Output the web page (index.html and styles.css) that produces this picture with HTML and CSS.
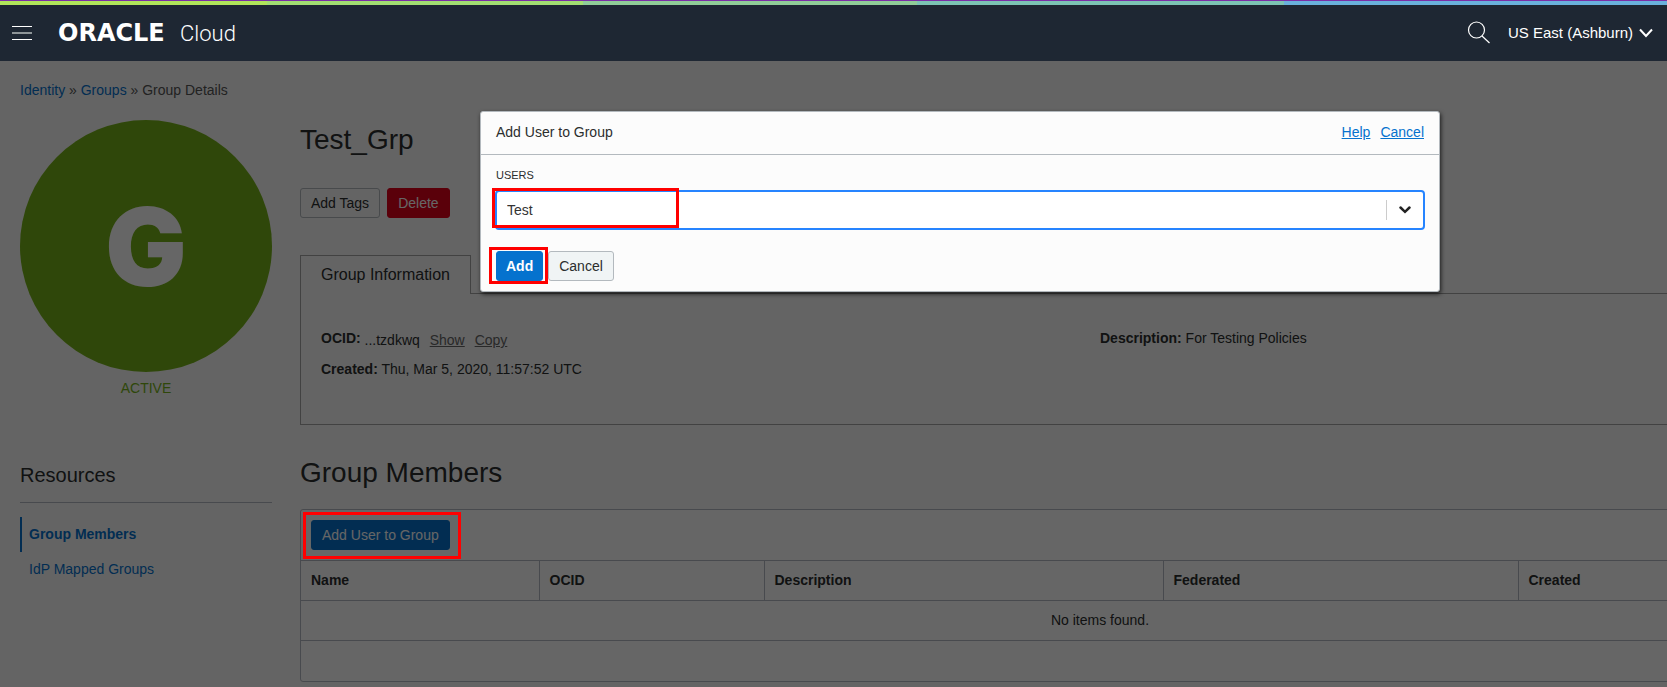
FILE: index.html
```html
<!DOCTYPE html>
<html lang="en">
<head>
  <meta charset="UTF-8">
  <meta name="viewport" content="width=device-width, initial-scale=1.0">
  <title>Group Details | Oracle Cloud</title>
  <link rel="stylesheet" href="styles.css">
</head>
<body>

  <header class="topbar">
    <button class="menu-btn" aria-label="Open menu">
      <svg width="20" height="14" viewBox="0 0 20 14">
        <path d="M0 0.5h20M0 13.5h20" stroke="#fff"/>
        <path d="M0 7h20" stroke="#8e9598" stroke-width="2"/>
      </svg>
    </button>
    <a class="logo" href="#"><span class="logo-brand">ORACLE</span><span class="logo-product">Cloud</span></a>
    <button class="search-btn" aria-label="Search">
      <svg width="24" height="24" viewBox="0 0 24 24" fill="none" stroke="#fff" stroke-width="1.2">
        <circle cx="9.5" cy="9" r="8"/>
        <path d="M15 15l7.500 7"/>
      </svg>
    </button>
    <button class="region-btn">
      US East (Ashburn)
      <svg width="14" height="10" viewBox="0 0 14 10" fill="none" stroke="#fff" stroke-width="2">
        <path d="M1 1.500l6 6.500 6-6.500"/>
      </svg>
    </button>
  </header>

  <div class="page">
    <nav class="breadcrumb">
      <a href="#">Identity</a> » <a href="#">Groups</a> » Group Details
    </nav>

    <div class="layout">
      <aside class="sidebar">
        <div class="avatar">G</div>
        <div class="status">ACTIVE</div>
        <h2 class="resources-title">Resources</h2>
        <ul class="resources">
          <li><a class="active" href="#">Group Members</a></li>
          <li><a href="#">IdP Mapped Groups</a></li>
        </ul>
      </aside>

      <main class="content">
        <h1>Test_Grp</h1>
        <div class="actions">
          <button class="btn">Add Tags</button>
          <button class="btn btn-danger">Delete</button>
        </div>

        <div class="tabs">
          <button class="tab">Group Information</button>
          <div class="tabs-line"></div>
        </div>
        <div class="info">
          <div class="info-col">
            <div class="info-row ocid"><b>OCID:</b> <span>...tzdkwq</span> <a href="#">Show</a> <a href="#">Copy</a></div>
            <div class="info-row"><b>Created:</b> Thu, Mar 5, 2020, 11:57:52 UTC</div>
          </div>
          <div class="info-col">
            <div class="info-row"><b>Description:</b> For Testing Policies</div>
          </div>
        </div>

        <h1 class="members-title">Group Members</h1>
        <div class="members">
          <div class="toolbar">
            <button class="btn btn-primary">Add User to Group</button>
            <span class="mark mark-open"></span>
          </div>
          <table>
            <colgroup>
              <col class="col-name"><col class="col-ocid"><col class="col-desc"><col class="col-fed"><col>
            </colgroup>
            <thead>
              <tr><th>Name</th><th>OCID</th><th>Description</th><th>Federated</th><th>Created</th></tr>
            </thead>
            <tbody>
              <tr><td colspan="5">No items found.</td></tr>
            </tbody>
          </table>
          <div class="members-footer"></div>
        </div>
      </main>
    </div>

    <div class="overlay"></div>

    <div class="modal" role="dialog" aria-labelledby="modal-title">
      <div class="modal-header">
        <span id="modal-title">Add User to Group</span>
        <div class="modal-links"><a href="#">Help</a><a href="#">Cancel</a></div>
      </div>
      <form class="modal-body">
        <label for="users">USERS</label>
        <div class="select">
          <input type="text" id="users" value="Test">
          <button type="button" class="select-arrow" aria-label="Show users">
            <svg width="12" height="8" viewBox="0 0 12 8" fill="none" stroke="#222" stroke-width="2.500" stroke-linecap="round">
              <path d="M1.500 1.500l4.500 4.300 4.500-4.300"/>
            </svg>
          </button>
          <span class="mark mark-select"></span>
        </div>
        <div class="modal-actions">
          <button type="button" class="btn btn-primary btn-add">Add<span class="mark mark-add"></span></button>
          <button type="button" class="btn">Cancel</button>
        </div>
      </form>
    </div>
  </div>

</body>
</html>
```
FILE: styles.css
```css
/* General */
* {
  box-sizing: border-box;
}

body {
  margin: 0;
  min-height: 100vh;
  display: flex;
  flex-direction: column;
  overflow: hidden;
  font-family: "Liberation Sans", Arial, sans-serif;
  font-size: 14px;
  line-height: 20px;
  color: #2b2e2e;
  background: #fafafa;
}

button {
  font: inherit;
  cursor: pointer;
}

a {
  color: #0572ce;
  text-decoration: none;
}

/* Top bar */
.topbar {
  display: flex;
  align-items: center;
  height: 61px;
  padding: 5px 14px 0 12px;
  background:
    linear-gradient(#7b2fa6, #7b2fa6) 0 0 / 100% 1px no-repeat,
    linear-gradient(90deg, #b0e55a 16%, #a2de72 16% 35%, #90cd98 35% 55%, #7cc4b4 55% 77%, #6ab1dc 77%) 0 1px / 100% 4px no-repeat,
    #1e2733;
}

.topbar button {
  display: flex;
  align-items: center;
  padding: 0;
  border: 0;
  background: none;
  color: #fff;
}

.logo {
  display: flex;
  flex: 1;
  align-items: baseline;
  margin-left: 26px;
  color: #fff;
}

.logo-brand {
  min-width: 122px;
  font: bold 24px "DejaVu Sans", Verdana, sans-serif;
}

.logo-product {
  font: 300 22px Roboto, "Liberation Sans", sans-serif;
}

.topbar .region-btn {
  gap: 6px;
  margin-left: 17px;
  font-size: 15px;
}

/* Page is laid out for wide screens, the rest is cut off */
.page {
  position: relative;
  flex: 1;
  min-width: 1920px;
  padding: 19px 20px 5px;
}

.breadcrumb {
  color: #555;
}

.layout {
  display: flex;
  gap: 28px;
  margin-top: 20px;
}

.sidebar {
  width: 252px;
}

.avatar {
  display: flex;
  justify-content: center;
  align-items: center;
  height: 252px;
  border-radius: 50%;
  background: #76b219;
  color: #fff;
  font: 900 108px Inter, "Liberation Sans", sans-serif;
}

.status {
  margin-top: 6px;
  text-align: center;
  color: #76b219;
}

.resources-title {
  margin: 64px 0 14px;
  padding-bottom: 14px;
  border-bottom: 1px solid #b5b8c2;
  font-size: 20px;
  font-weight: normal;
  line-height: 26px;
}

.resources {
  margin: 0;
  padding: 0;
  list-style: none;
}

.resources a {
  display: block;
  padding: 7px;
  border-left: 2px solid transparent;
  line-height: 21px;
}

.resources .active {
  border-color: #0572ce;
  font-weight: bold;
}

.content {
  flex: 1;
}

h1 {
  margin: 0;
  font-size: 28px;
  font-weight: normal;
  line-height: 40px;
}

.btn {
  height: 30px;
  padding: 0 10px;
  border: 1px solid #b3b9be;
  border-radius: 3px;
  background: #fafafa;
  color: #2b2e2e;
}

.btn-danger {
  border-color: #e0001b;
  background: #e0001b;
  color: #fff;
}

.btn-primary {
  border-color: #0572ce;
  background: #0572ce;
  color: #fff;
}

.actions {
  display: flex;
  gap: 7px;
  margin: 28px 0 37px;
}

/* Tabs and group information */
.tabs {
  display: flex;
}

.tab {
  height: 39px;
  padding: 0 20px;
  border: 1px solid #a5a5a5;
  border-bottom: 0;
  background: none;
  color: #2b2e2e;
  font-size: 16px;
}

.tabs-line {
  flex: 1;
  border-bottom: 1px solid #a5a5a5;
}

.info {
  display: grid;
  grid-template-columns: 1fr 1fr;
  height: 131px;
  padding: 34px 20px;
  border: 1px solid #a5a5a5;
  border-top: 0;
}

.info-row {
  height: 20px;
  margin-bottom: 11px;
}

.info-row a {
  margin-left: 6px;
  color: #666;
  text-decoration: underline;
}

.ocid span,
.ocid a {
  vertical-align: -2px;
}

.members-title {
  margin: 28px 0 16px;
}

/* Members table */
.members {
  border: 1px solid #b5b8c2;
  border-radius: 3px;
  background: #fff;
}

.toolbar {
  display: flex;
  position: relative;
  padding: 10px;
}

table {
  width: 100%;
  table-layout: fixed;
  border-collapse: collapse;
}

.col-name {
  width: 238px;
}

.col-ocid {
  width: 225px;
}

.col-desc {
  width: 399px;
}

.col-fed {
  width: 355px;
}

th,
td {
  height: 40px;
  padding: 0 10px 2px;
  border-top: 1px solid #b5b8c2;
  border-bottom: 1px solid #b5b8c2;
  text-align: center;
}

th {
  text-align: left;
}

th + th {
  border-left: 1px solid #b5b8c2;
}

.members-footer {
  height: 40px;
}

/* Dimmed backdrop */
.overlay {
  position: absolute;
  inset: 0;
  background: rgba(0, 0, 0, 0.6);
}

/* Modal */
.modal {
  position: absolute;
  top: 50px;
  left: 50%;
  width: 960px;
  transform: translateX(-50%);
  border: 1px solid #b3b9be;
  border-radius: 3px;
  background: #fcfcfc;
  box-shadow: 1px 2px 4px rgba(0, 0, 0, 0.7);
}

.modal-header {
  display: flex;
  justify-content: space-between;
  padding: 10px 15px 12px;
  border-bottom: 1px solid #b3b9be;
}

.modal-links {
  display: flex;
  gap: 10px;
}

.modal-links a {
  text-decoration: underline;
}

.modal-body {
  padding: 10px 15px;
}

.modal-body label {
  display: block;
  margin-bottom: 5px;
  font-size: 11px;
}

.select {
  display: flex;
  align-items: center;
  position: relative;
  height: 40px;
  margin: 0 -1px;
  border: 2px solid #2684ff;
  border-radius: 4px;
  background: #fff;
}

.select input {
  flex: 1;
  padding: 0 10px;
  border: 0;
  outline: none;
  background: none;
  color: #333;
  font: inherit;
}

.select-arrow {
  display: flex;
  justify-content: center;
  align-items: center;
  width: 37px;
  height: 20px;
  padding: 0;
  border: 0;
  border-left: 1px solid #ccc;
  background: none;
}

.modal-actions {
  display: flex;
  gap: 5px;
  margin-top: 21px;
}

.modal-actions .btn {
  background: #f0f4f5;
}

.modal-actions .btn-add {
  position: relative;
  padding: 0 9px;
  background: #0572ce;
  font-weight: bold;
}

/* Red highlight frames */
.mark {
  position: absolute;
  z-index: 1;
  border: 3px solid #f00;
  pointer-events: none;
}

.mark-open {
  top: 2px;
  left: 2px;
  width: 158px;
  height: 47px;
}

.mark-select {
  top: -4px;
  left: -5px;
  width: 187px;
  height: 40px;
}

.mark-add {
  inset: -5px -6px -4px -8px;
}
```
